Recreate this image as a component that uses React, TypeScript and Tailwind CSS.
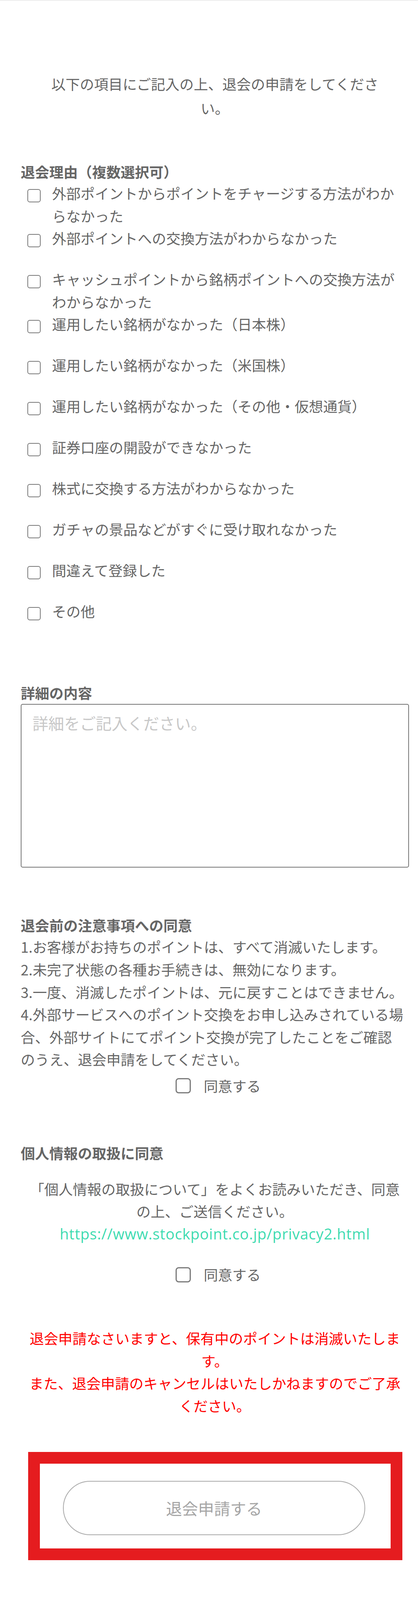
import React from "react";

const reasons: React.ReactNode[] = [
  <>外部ポイントからポイントをチャージする方法がわか<br />らなかった</>,
  <>外部ポイントへの交換方法がわからなかった</>,
  <>キャッシュポイントから銘柄ポイントへの交換方法が<br />わからなかった</>,
  <>運用したい銘柄がなかった（日本株）</>,
  <>運用したい銘柄がなかった（米国株）</>,
  <>運用したい銘柄がなかった（その他・仮想通貨）</>,
  <>証券口座の開設ができなかった</>,
  <>株式に交換する方法がわからなかった</>,
  <>ガチャの景品などがすぐに受け取れなかった</>,
  <>間違えて登録した</>,
  <>その他</>,
];

function SmallBox() {
  return (
    <span className="mt-[18px] block h-[34px] w-[34px] shrink-0 rounded-[6px] border-[2.5px] border-[#7a7a7a] bg-white" />
  );
}

function Agree({ className }: { className: string }) {
  return (
    <div className={`flex h-[57.6px] items-center justify-center pl-[17px] ${className}`}>
      <span className="block h-[39px] w-[39px] shrink-0 rounded-[8px] border-[3px] border-[#7a7a7a] bg-white" />
      <span className="ml-[33px] leading-[57.6px]">同意する</span>
    </div>
  );
}

export default function App() {
  return (
    <div className="min-h-[4142px] w-full border-t-2 border-[#ededed] bg-white font-['Noto_Sans_CJK_JP',sans-serif] text-[36.5px] text-[#666]">
      <div className="pl-[53px] pr-[23px] pt-[182px] pb-[147px]">
        <p className="h-[124px] text-center leading-[62px]">
          以下の項目にご記入の上、退会の申請をしてくださ
          <br />
          い。
        </p>

        <h2 className="mt-[106px] h-[52px] font-bold leading-[52px]">退会理由（複数選択可）</h2>
        <ul className="pl-[17px] pr-[20px]">
          {reasons.map((r, i) => (
            <li key={i} className="flex min-h-[105px] items-start">
              <SmallBox />
              <span className="ml-[29px] leading-[57.6px]">{r}</span>
            </li>
          ))}
        </ul>

        <h2 className="mt-[107px] h-[52px] font-bold leading-[52px]">詳細の内容</h2>
        <textarea
          className="mt-[2px] block h-[419px] w-full resize-none rounded-[5px] border-2 border-[#777] bg-white pl-[28px] pr-[20px] pt-[23px] text-[40.5px] leading-[1.2] text-[#666] outline-none placeholder:text-[#c8c8c8]"
          placeholder="詳細をご記入ください。"
        />

        <h2 className="mt-[122px] h-[52px] font-bold leading-[52px]">退会前の注意事項への同意</h2>
        <p className="h-[345.6px] leading-[57.6px]">
          1.お客様がお持ちのポイントは、すべて消滅いたします。
          <br />
          2.未完了状態の各種お手続きは、無効になります。
          <br />
          3.一度、消滅したポイントは、元に戻すことはできません。
          <br />
          4.外部サービスへのポイント交換をお申し込みされている場
          <br />
          合、外部サイトにてポイント交換が完了したことをご確認
          <br />
          のうえ、退会申請をしてください。
        </p>
        <Agree className="mt-[10px]" />

        <h2 className="mt-[117px] h-[52px] font-bold leading-[52px]">個人情報の取扱に同意</h2>
        <div className="mt-[37px] h-[172.8px] text-center leading-[57.6px]">
          <p>
            「個人情報の取扱について」をよくお読みいただき、同意
            <br />
            の上、ご送信ください。
          </p>
          <a
            className="block h-[57.6px] font-['Open_Sans',sans-serif] text-[38px] leading-[57.6px] tracking-[0.8px] text-[#3ddbb0]"
            href="#"
          >
            https://www.stockpoint.co.jp/privacy2.html
          </a>
        </div>
        <Agree className="mt-[47px]" />

        <p className="mt-[105px] h-[230.4px] text-center leading-[57.6px] text-[#ff0000]">
          退会申請なさいますと、保有中のポイントは消滅いたしま
          <br />
          す。
          <br />
          また、退会申請のキャンセルはいたしかねますのでご了承
          <br />
          ください。
        </p>

        <div className="ml-[19px] mr-[17px] mt-[90px] h-[277px] border-[30px] border-[#e51c1f] bg-white pt-[44px]">
          <button
            type="button"
            className="ml-[59px] flex h-[139px] w-[773px] items-center justify-center rounded-full border-[2px] border-[#aaaaaa] bg-white text-[41px] leading-none text-[#a6a6a6]"
          >
            退会申請する
          </button>
        </div>
      </div>
    </div>
  );
}
